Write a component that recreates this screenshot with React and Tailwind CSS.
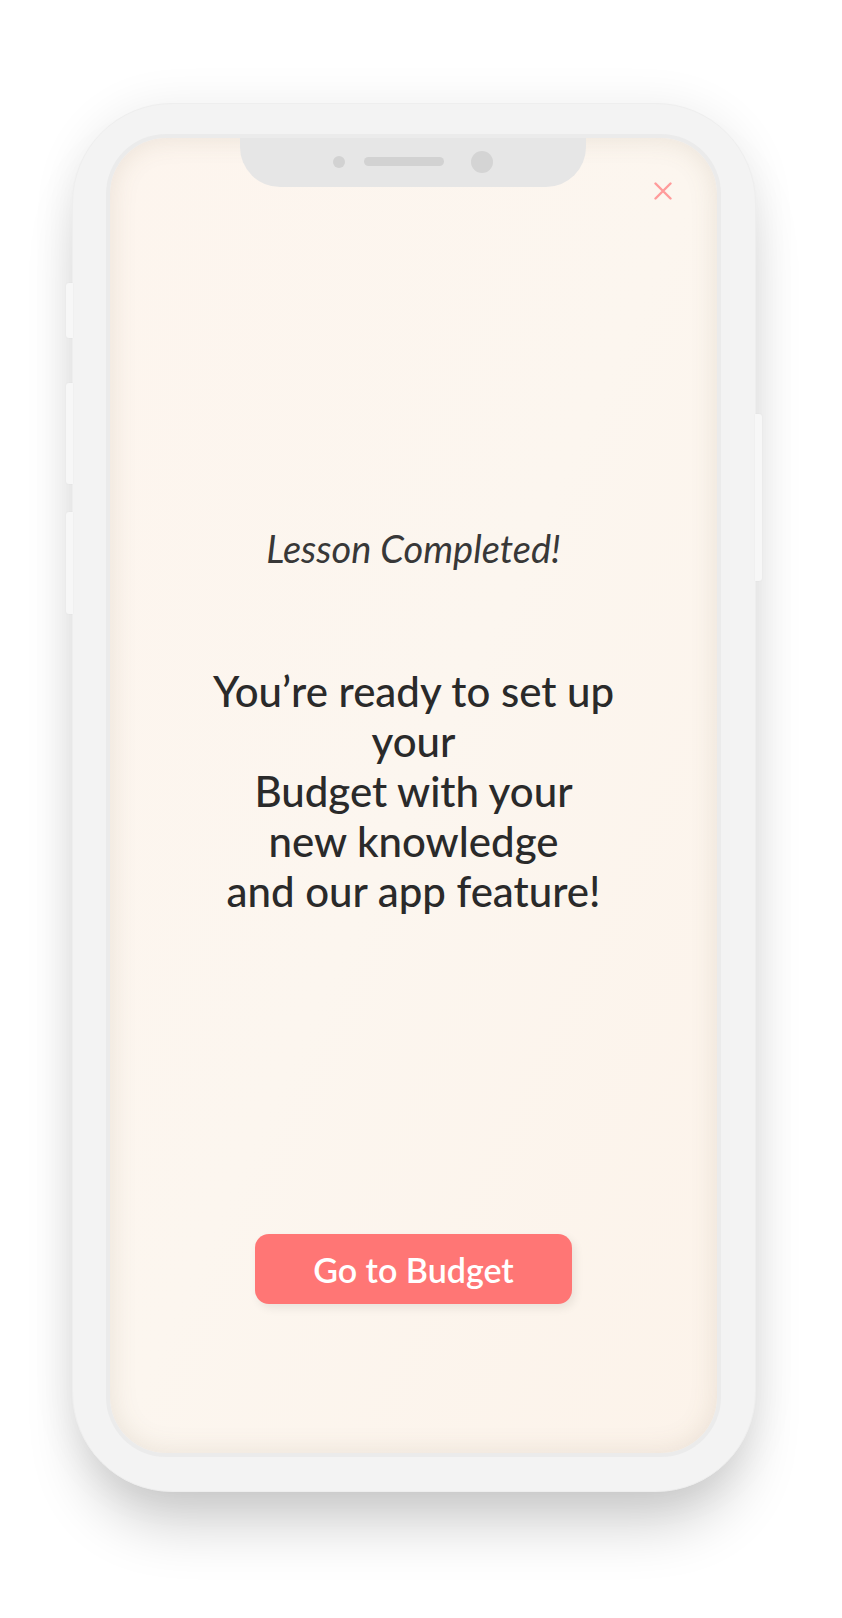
import React from 'react';

const SideButton = ({ className }) => (
    <div className={`absolute w-[7px] bg-[#f7f7f7] shadow-[0_0_2px_rgba(0,0,0,0.05)] ${className}`} />
);

const CloseIcon = () => (
    <svg width="18" height="18" viewBox="0 0 18 18" fill="none">
        <path d="M1.5 1.5 16.5 16.5M16.5 1.5 1.5 16.5" stroke="#ff9b9b" strokeWidth="2.4" strokeLinecap="round" />
    </svg>
);

const App = () => {
    return (
        <div className="w-[842px] h-[1618px] bg-white pt-[103px] pl-[72px]" style={{ fontFamily: 'Lato, "Noto Sans", sans-serif' }}>
            <div className="relative w-[684px] h-[1389px] rounded-[100px] bg-[#f3f3f3] border border-[#eeeeee] shadow-[0_45px_60px_-15px_rgba(0,0,0,0.2),0_0_45px_rgba(0,0,0,0.07)] pt-[34px] pl-[37px] pr-[38px] pb-[38px]">
                <SideButton className="-left-[7px] top-[179px] h-[55px] rounded-l-[3px]" />
                <SideButton className="-left-[7px] top-[279px] h-[101px] rounded-l-[3px]" />
                <SideButton className="-left-[7px] top-[408px] h-[102px] rounded-l-[3px]" />
                <SideButton className="-right-[7px] top-[310px] h-[167px] rounded-r-[3px]" />

                <div className="relative h-full rounded-[56px] ring-[4px] ring-[#ebebeb] bg-[#fcf5ee] bg-gradient-to-br from-[#fdf5ee] via-[#fcf6ef] to-[#fcf3ea] shadow-[inset_0_0_28px_rgba(110,90,60,0.13)] overflow-hidden flex flex-col items-center">
                    <div className="absolute top-0 left-[130px] w-[346px] h-[49px] bg-[#e6e6e6] rounded-b-[40px] flex items-center justify-center gap-[19px] pb-[2px]">
                        <div className="w-[12px] h-[12px] rounded-full bg-[#d2d2d2]" />
                        <div className="w-[80px] h-[9px] rounded-full bg-[#d2d2d2]" />
                        <div className="w-[22px] h-[22px] rounded-full bg-[#d4d4d4] ml-[8px]" />
                    </div>

                    <div className="w-full flex justify-end pt-[44px] pr-[45px]">
                        <CloseIcon />
                    </div>

                    <p className="mt-[326px] text-[38px] leading-[44px] italic font-normal text-[#383838]">
                        Lesson Completed!
                    </p>

                    <p className="mt-[96px] text-[42px] leading-[50px] font-medium text-[#2a2a2a] text-center">
                        You’re ready to set up<br />
                        your<br />
                        Budget with your<br />
                        new knowledge<br />
                        and our app feature!
                    </p>

                    <button className="mt-[318px] w-[317px] h-[70px] rounded-[14px] bg-[#ff7675] shadow-[3px_4px_10px_rgba(0,0,0,0.08)] text-white text-[34px] font-semibold">
                        Go to Budget
                    </button>
                </div>
            </div>
        </div>
    );
};

export default App;
